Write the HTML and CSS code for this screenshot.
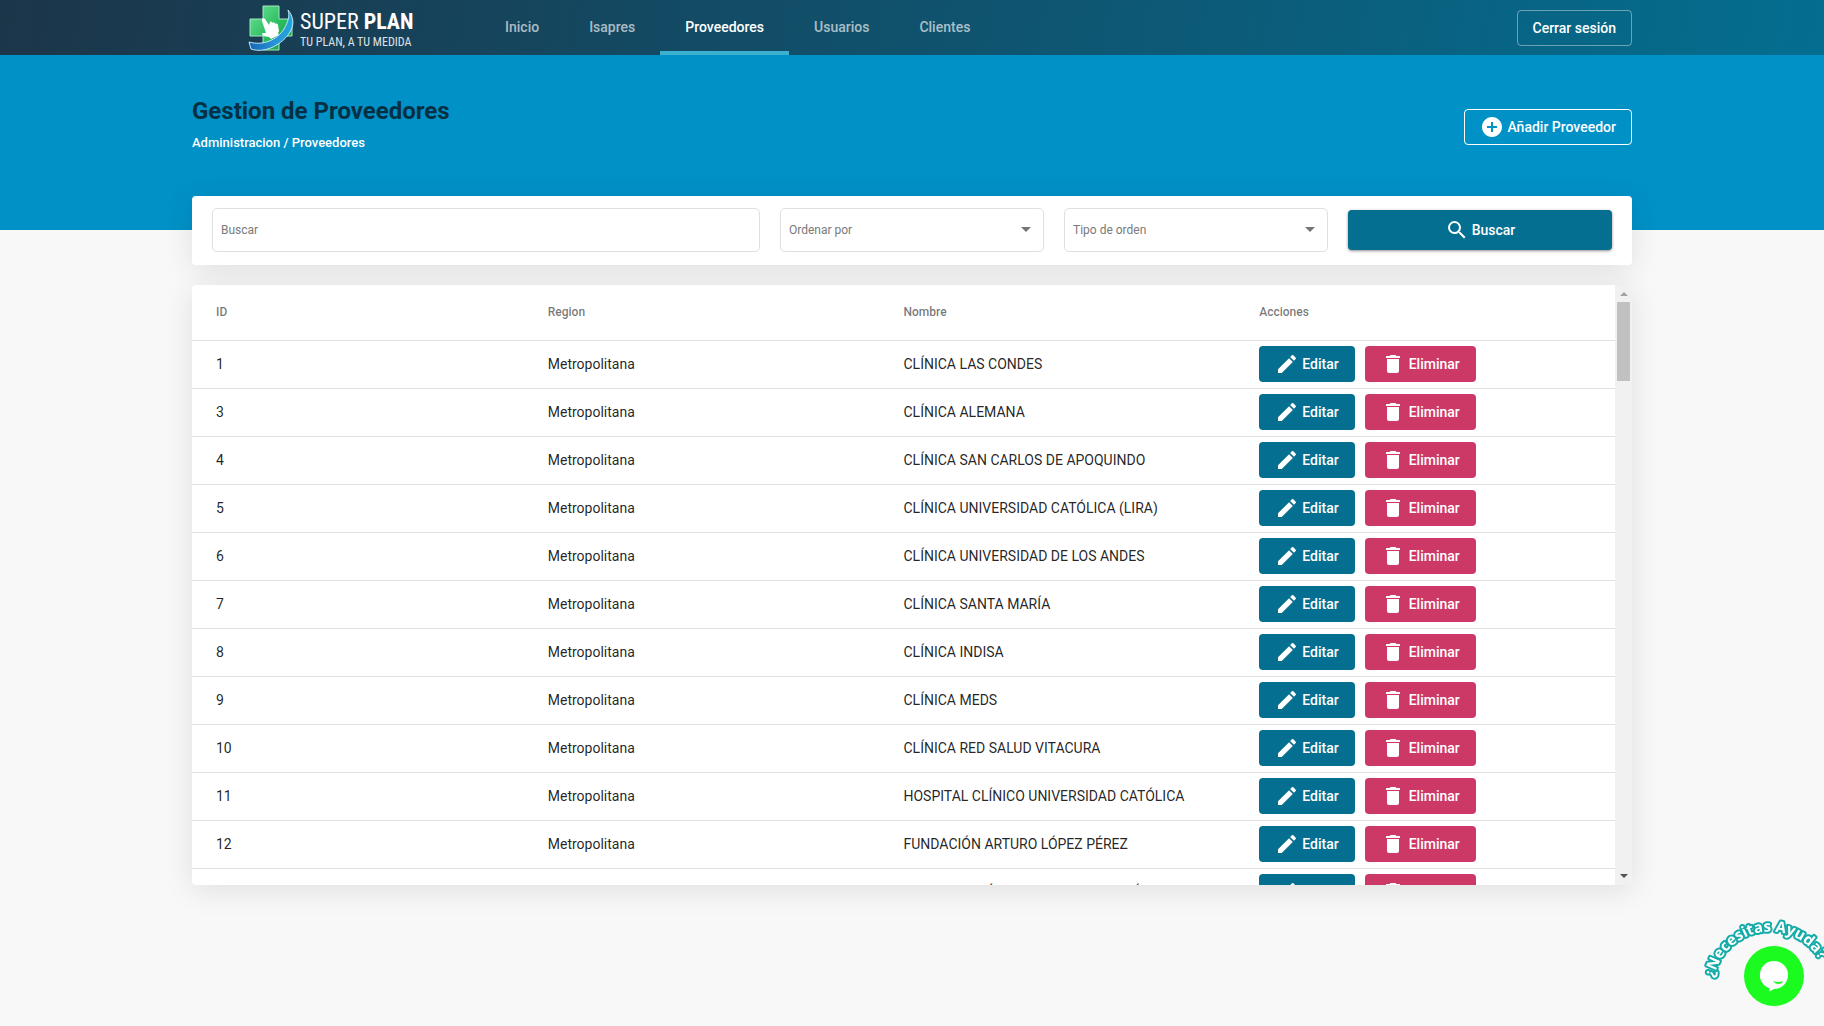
FILE: index.html
```html
<!DOCTYPE html>
<html lang="es">
<head>
<meta charset="utf-8">
<meta name="viewport" content="width=device-width, initial-scale=1">
<title>Gestion de Proveedores</title>
<link rel="stylesheet" href="styles.css">
</head>
<body>
<svg class="sprite" aria-hidden="true">
  <symbol id="edit" viewBox="0 0 24 24"><path d="M3 17.25V21h3.75L17.81 9.94l-3.75-3.75L3 17.25zM20.71 7.04a1 1 0 0 0 0-1.41l-2.34-2.34a1 1 0 0 0-1.41 0l-1.83 1.83 3.75 3.75 1.83-1.83z"/></symbol>
  <symbol id="delete" viewBox="0 0 24 24"><path d="M6 19c0 1.100.9 2 2 2h8c1.100 0 2-.9 2-2V7H6v12zM19 4h-3.500l-1-1h-5l-1 1H5v2h14V4z"/></symbol>
  <symbol id="search" viewBox="0 0 24 24"><path d="M15.500 14h-.79l-.28-.27A6.470 6.470 0 0 0 16 9.500 6.500 6.500 0 1 0 9.500 16c1.610 0 3.090-.59 4.230-1.570l.27.28v.79l5 4.990L20.490 19l-4.990-5zm-6 0C7.010 14 5 11.990 5 9.500S7.010 5 9.500 5 14 7.010 14 9.500 11.990 14 9.500 14z"/></symbol>
  <symbol id="add" viewBox="0 0 24 24"><path d="M12 2C6.480 2 2 6.480 2 12s4.480 10 10 10 10-4.480 10-10S17.520 2 12 2zm5 11h-4v4h-2v-4H7v-2h4V7h2v4h4v2z"/></symbol>
</svg>

<header class="topbar">
  <div class="container topbar-inner">
    <a class="brand" href="#inicio" aria-label="Super Plan">
      <svg class="brand-mark" viewBox="0 0 46 46" aria-hidden="true">
        <defs>
          <linearGradient id="cross" x1="0" y1="0" x2="1" y2="1"><stop offset="0" stop-color="#6fe39a"/><stop offset=".5" stop-color="#2fbf62"/><stop offset="1" stop-color="#1c9a45"/></linearGradient>
          <linearGradient id="swoosh" x1="0" y1="0" x2="1" y2="0"><stop offset="0" stop-color="#1565b5"/><stop offset=".6" stop-color="#2a93d8"/><stop offset="1" stop-color="#1fa8dc"/></linearGradient>
        </defs>
        <path d="M15 1h16v13h13v17H31v14H15V31H2V14h13z" fill="url(#cross)" stroke="#a5e8c0" stroke-width="1"/>
        <path d="M14 14c1-1 2-1 3 0l4 6 1-3c1-1 2 0 2 1 1-1 3-1 3 1 1-1 3 0 3 1l1 6-1 2 1 2-8 4-2-2-6-1-1-3h4l-1-3-3-9z" fill="#fff"/>
        <path d="M40 5c5 6 7 14 2 22C35 39 17 49 3 44l-2-7c14 4 28-2 35-13 4-7 6-13 4-19z" fill="url(#swoosh)" stroke="#bfe6f7" stroke-width="1"/>
      </svg>
      <span class="brand-text">
        <span class="brand-name">SUPER <b>PLAN</b></span>
        <span class="brand-tag">TU PLAN, A TU MEDIDA</span>
      </span>
    </a>
    <nav class="nav">
      <a href="#inicio">Inicio</a>
      <a href="#isapres">Isapres</a>
      <a class="active" href="#proveedores" aria-current="page">Proveedores</a>
      <a href="#usuarios">Usuarios</a>
      <a href="#clientes">Clientes</a>
    </nav>
    <button class="btn btn-outline btn-logout" type="button">Cerrar sesión</button>
  </div>
</header>

<section class="banner">
  <div class="container banner-inner">
    <div class="heading">
      <h1>Gestion de Proveedores</h1>
      <p class="crumbs">Administracion / Proveedores</p>
    </div>
    <button class="btn btn-outline" type="button"><svg class="icon" aria-hidden="true"><use href="#add"/></svg>Añadir Proveedor</button>
  </div>
</section>

<main class="container content">
  <form class="filters">
    <input class="field wide" type="text" placeholder="Buscar" aria-label="Buscar">
    <div class="select">
      <select class="field" aria-label="Ordenar por"><option>Ordenar por</option><option>ID</option><option>Nombre</option></select>
      <span class="caret"></span>
    </div>
    <div class="select">
      <select class="field" aria-label="Tipo de orden"><option>Tipo de orden</option><option>Ascendente</option><option>Descendente</option></select>
      <span class="caret"></span>
    </div>
    <button class="btn btn-search" type="button"><svg class="icon" aria-hidden="true"><use href="#search"/></svg>Buscar</button>
  </form>

  <div class="panel">
    <div class="scroll">
      <table>
        <thead><tr><th>ID</th><th>Region</th><th>Nombre</th><th>Acciones</th></tr></thead>
        <tbody id="rows"></tbody>
      </table>
    </div>
    <div class="scrollbar" aria-hidden="true">
      <span class="arrow up"></span>
      <span class="thumb"></span>
      <span class="arrow down"></span>
    </div>
  </div>
</main>

<div class="help">
  <svg class="help-arc" viewBox="0 0 124 80" aria-hidden="true">
    <path id="arc" d="M14 62A57 57 0 0 1 127 71" fill="none"/>
    <text><textPath href="#arc">¿Necesitas Ayuda?</textPath></text>
  </svg>
  <button class="chat" type="button" aria-label="Abrir chat">
    <svg viewBox="0 0 60 60" aria-hidden="true"><path d="M30 15a14 14 0 0 1 0 28l-4.500 2.500V42.300A14 14 0 0 1 30 15z" fill="#fff"/><path d="M29 35q5 2 10 0-1 3-4.500 3T29 35z" fill="#1bfb20"/></svg>
  </button>
</div>
<script src="rows.js"></script>
</body>
</html>
```

FILE: rows.js
```js
const providers = [
  [1, "CLÍNICA LAS CONDES"],
  [3, "CLÍNICA ALEMANA"],
  [4, "CLÍNICA SAN CARLOS DE APOQUINDO"],
  [5, "CLÍNICA UNIVERSIDAD CATÓLICA (LIRA)"],
  [6, "CLÍNICA UNIVERSIDAD DE LOS ANDES"],
  [7, "CLÍNICA SANTA MARÍA"],
  [8, "CLÍNICA INDISA"],
  [9, "CLÍNICA MEDS"],
  [10, "CLÍNICA RED SALUD VITACURA"],
  [11, "HOSPITAL CLÍNICO UNIVERSIDAD CATÓLICA"],
  [12, "FUNDACIÓN ARTURO LÓPEZ PÉREZ"],
  [13, "HOSPITAL CLÍNICO DE LA FUERZA AÉREA"]
];

const icon = (name) => `<svg class="icon" aria-hidden="true"><use href="#${name}"/></svg>`;

document.getElementById("rows").innerHTML = providers.map(([id, name]) => `
  <tr>
    <td>${id}</td>
    <td>Metropolitana</td>
    <td>${name}</td>
    <td><div class="actions">
      <button class="btn btn-edit" type="button">${icon("edit")}Editar</button>
      <button class="btn btn-delete" type="button">${icon("delete")}Eliminar</button>
    </div></td>
  </tr>`).join("");
```

FILE: styles.css
```css
* { box-sizing: border-box; }

body {
  margin: 0;
  min-height: 100vh;
  background: #f8f8f8;
  color: rgba(0, 0, 0, .87);
  font-family: Roboto, "Liberation Sans", sans-serif;
  font-size: 14px;
}

.sprite { display: none; }

.container {
  width: 100%;
  max-width: 1440px;
  margin: 0 auto;
}

.icon { width: 24px; height: 24px; fill: currentColor; flex: none; }

.btn {
  display: inline-flex;
  align-items: center;
  justify-content: center;
  gap: 3px;
  height: 36px;
  padding: 0 16px;
  border: 0;
  border-radius: 4px;
  color: #fff;
  font: 500 14px/34px Roboto, "Liberation Sans", sans-serif;
  white-space: nowrap;
  cursor: pointer;
}
.btn-outline { padding: 0 15px; border: 1px solid #fff; background: transparent; }
.btn-logout { border-color: rgba(255, 255, 255, .4); margin-left: auto; }
.btn-edit, .btn-search { background: #046f91; }
.btn-delete { gap: 4px; background: #cd3967; }

/* Top bar */
.topbar { background: linear-gradient(100deg, #1c3549, #046e90); }
.topbar-inner { display: flex; align-items: center; height: 55px; }

.brand {
  display: flex;
  align-items: center;
  gap: 6px;
  width: 232px;
  margin-left: 56px;
  color: #fff;
  text-decoration: none;
}
.brand-mark { width: 46px; height: 46px; }
.brand-text {
  display: grid;
  padding-top: 2px;
  font-family: "Roboto Condensed", "Liberation Sans Narrow", "Liberation Sans", sans-serif;
  white-space: nowrap;
}
.brand-name { font-size: 22px; line-height: 26px; }
.brand-tag { font-size: 12px; line-height: 14px; opacity: .85; }

.nav { display: flex; align-self: stretch; }
.nav a {
  padding: 0 25px;
  border-bottom: 4px solid transparent;
  color: rgba(255, 255, 255, .65);
  font-weight: 500;
  line-height: 55px;
  height: 55px;
  text-decoration: none;
}
.nav a.active { color: #fff; border-color: #3cb0cf; }

/* Banner */
.banner { height: 175px; background: #0091c7; }
.banner-inner { display: flex; justify-content: space-between; align-items: center; height: 144px; }
.heading { padding-bottom: 4px; }
h1 { margin: 0; color: #053043; font-size: 24px; font-weight: 700; line-height: 32px; }
.crumbs { margin: 4px 0 0; color: #fff; font-size: 13px; font-weight: 500; line-height: 24px; }

/* Filters */
.content { display: grid; gap: 20px; margin-top: -34px; }
.filters {
  display: grid;
  grid-template-columns: repeat(5, 1fr);
  gap: 20px;
  align-items: center;
  height: 69px;
  padding: 0 20px 2px;
  border-radius: 4px;
  background: #fff;
  box-shadow: 0 5px 30px rgba(0, 0, 0, .1);
}
.wide { grid-column: span 2; }
.field {
  width: 100%;
  height: 44px;
  padding: 0 8px;
  border: 1px solid #dfdfdf;
  border-radius: 5px;
  background: #fff;
  color: #7a7a7a;
  font: 400 12px/20px Roboto, "Liberation Sans", sans-serif;
  appearance: none;
}
.field::placeholder { color: #7a7a7a; }
.select { display: grid; align-items: center; }
.select > * { grid-area: 1 / 1; }
.caret {
  justify-self: end;
  margin-right: 13px;
  border: 5px solid transparent;
  border-top-color: #757575;
  border-bottom: 0;
  pointer-events: none;
}
.btn-search { height: 40px; box-shadow: 0 1px 3px rgba(0, 0, 0, .45); }

/* Table */
.panel {
  display: flex;
  height: 600px;
  border-radius: 4px;
  background: #fff;
  overflow: hidden;
  box-shadow: 0 5px 30px rgba(0, 0, 0, .1);
}
.scroll { flex: 1; overflow-y: auto; scrollbar-width: none; }
table { width: 100%; border-collapse: separate; border-spacing: 0; table-layout: fixed; }
th, td { padding: 0 0 2px; border-bottom: 1px solid #e0e0e0; text-align: left; }
th { height: 56px; color: rgba(0, 0, 0, .54); font-size: 12px; font-weight: 500; }
td { height: 48px; }
th:first-child, td:first-child { padding-left: 24px; }
.actions { display: flex; gap: 10px; }

.scrollbar {
  display: flex;
  flex-direction: column;
  align-items: center;
  width: 17px;
  background: #f1f1f1;
}
.arrow { border: 4px solid transparent; }
.arrow.up { border-top: 0; border-bottom-color: #a3a3a3; margin: 7px 0 6px; }
.arrow.down { border-bottom: 0; border-top-color: #505050; margin: auto 0 7px; }
.thumb { width: 13px; height: 79px; background: #c1c1c1; }

/* Help widget, floats over the page corner */
.help { position: fixed; right: 0; bottom: 20px; width: 124px; height: 90px; }
.help-arc { display: block; width: 124px; height: 80px; overflow: visible; }
.help-arc text {
  font: 700 15px "Open Sans", sans-serif;
  fill: #fff;
  stroke: #14aba8;
  stroke-width: 4px;
  stroke-linejoin: round;
  paint-order: stroke;
}
.chat {
  position: absolute;
  right: 20px;
  bottom: 0;
  width: 60px;
  height: 60px;
  padding: 0;
  border: 0;
  border-radius: 50%;
  background: #1bfb20;
  cursor: pointer;
}
.chat svg { display: block; width: 60px; height: 60px; }
```
